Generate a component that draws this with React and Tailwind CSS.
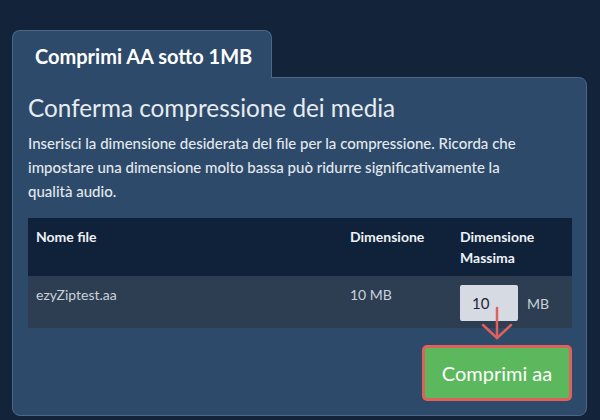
import React from "react";

// Compression confirm panel: tab header + card with file table and submit.
const files = [{ name: "ezyZiptest.aa", size: "10 MB", max: "10" }];

export default function App() {
  return (
    <div className="min-h-screen bg-[#12233a] px-3 pt-[30px] font-['Lato','Noto_Sans',sans-serif] antialiased">
      <div className="w-[575px]">
        <div className="relative z-10 -mb-px w-[260px] rounded-t-lg border border-b-0 border-[#4d6886] bg-[#2d4a6a] pl-[22px] pt-[13px] pb-[8px]">
          <span className="text-[20px] font-bold leading-6 text-white">Comprimi AA sotto 1MB</span>
        </div>
        <div className="rounded-b-lg rounded-tr-lg border border-[#4d6886] bg-[#2d4a6a] px-[15px] pt-4 pb-[14px]">
          <h2 className="text-[24.3px] leading-[27px] text-[#e8ecf1]">Conferma compressione dei media</h2>
          <p className="mt-[10px] text-[15px] font-medium leading-6 text-[#e3e8ee]">
            Inserisci la dimensione desiderata del file per la compressione. Ricorda che impostare una dimensione molto
            bassa può ridurre significativamente la
            <br />
            qualità audio.
          </p>
          <table className="mt-[15px] w-[544px] table-fixed border-collapse text-left">
            <thead>
              <tr className="h-[58px] bg-[#10223a] align-top text-[14px] font-bold leading-[21px] text-[#eef1f5]">
                <th className="w-[314px] px-2 pt-2">Nome file</th>
                <th className="w-[110px] px-2 pt-2">Dimensione</th>
                <th className="px-2 pt-2">
                  Dimensione
                  <br />
                  Massima
                </th>
              </tr>
            </thead>
            <tbody>
              {files.map((f) => (
                <tr key={f.name} className="h-[52px] bg-[#2e3e52] align-top text-[#c9d1db]">
                  <td className="px-2 pt-2 text-[14px] leading-[21px]">{f.name}</td>
                  <td className="px-2 pt-2 text-[14px] leading-[21px]">{f.size}</td>
                  <td className="px-2 pt-[9px]">
                    <div className="flex items-center gap-[9px]">
                      <input
                        defaultValue={f.max}
                        className="h-9 w-[58px] rounded-[2px] bg-[#d6dbe3] pl-3 text-[15px] text-[#1b2535] outline-none"
                      />
                      <span className="text-[14px] text-[#c9d1db]">MB</span>
                    </div>
                  </td>
                </tr>
              ))}
            </tbody>
          </table>
          <div className="mt-[17px] flex w-[544px] justify-end">
            <div className="relative">
              <svg
                className="absolute bottom-full left-1/2 mb-[4px] -translate-x-1/2"
                width="32"
                height="35"
                viewBox="0 0 32 35"
                fill="none"
                stroke="#e0605a"
                strokeWidth="2.5"
                strokeLinecap="round"
              >
                <path d="M16 2 V32" />
                <path d="M2 19 L16 32 L30 19" />
              </svg>
              <button className="h-14 w-[150px] rounded-[5px] border-[3px] border-[#e0605a] bg-[#5cb85c] text-[20px] text-white">
                Comprimi aa
              </button>
            </div>
          </div>
        </div>
      </div>
    </div>
  );
}
